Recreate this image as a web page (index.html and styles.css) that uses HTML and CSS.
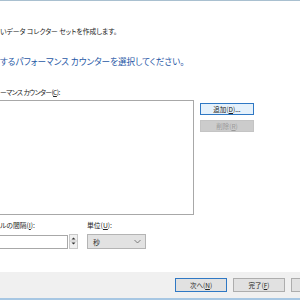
FILE: index.html
```
<!DOCTYPE html>
<html lang="ja">
<head>
<meta charset="utf-8">
<link rel="stylesheet" href="styles.css">
</head>
<body>
<div class="dialog">
  <div class="topbar"></div>
  <main class="content">
    <p class="desc">いデータ コレクター セットを作成します。</p>
    <h1 class="heading">するパフォーマンス カウンターを選択してください。</h1>
    <div class="label label-counter">ーマンス カウンター(<u>C</u>):</div>
    <div class="list-row">
      <div class="listbox"></div>
      <div class="side-buttons">
        <div class="btn default">追加(<u>D</u>)...</div>
        <div class="btn disabled">削除(<u>R</u>)</div>
      </div>
    </div>
    <div class="interval-row">
      <div class="field field-interval">
        <div class="label">ルの間隔(<u>I</u>):</div>
        <div class="input-group">
          <div class="input"></div>
          <div class="spinner">
            <svg width="9" height="14" viewBox="0 0 9 14"><path d="M2.5 5.5 L4.5 3.5 L6.5 5.5 Z" fill="#333"/><path d="M2.5 8.5 L4.5 10.5 L6.5 8.5 Z" fill="#333"/><line x1="0" y1="7" x2="9" y2="7" stroke="#c8c8c8"/></svg>
          </div>
        </div>
      </div>
      <div class="field field-unit">
        <div class="label">単位(<u>U</u>):</div>
        <div class="select">
          <span>秒</span>
          <svg width="7" height="5" viewBox="0 0 7 5"><path d="M0.5 1 L3.5 4 L6.5 1" fill="none" stroke="#666" stroke-width="0.8"/></svg>
        </div>
      </div>
    </div>
  </main>
  <footer class="footer">
    <div class="btn default">次へ(<u>N</u>)</div>
    <div class="btn">完了(<u>F</u>)</div>
    <div class="btn"></div>
  </footer>
  <div class="bottombar"></div>
</div>
</body>
</html>
```
FILE: styles.css
```
html, body {
  margin: 0;
  padding: 0;
  background: #ffffff;
}
body {
  font-family: "Noto Sans CJK JP", "Noto Sans", sans-serif;
  font-feature-settings: "palt";
  color: #1a1a1a;
  overflow: hidden;
}
.dialog {
  width: 300px;
  height: 300px;
  display: flex;
  flex-direction: column;
  overflow: hidden;
}
.topbar {
  height: 1px;
  background: #a9c0d0;
}
.content {
  flex: 1;
  display: flex;
  flex-direction: column;
}
.desc {
  margin: 25px 0 0 0;
  font-size: 6.8px;
  line-height: 11px;
  color: #222;
  white-space: nowrap;
}
.heading {
  margin: 18px 0 0 0;
  font-size: 8.6px;
  line-height: 13px;
  font-weight: normal;
  color: #1f58a6;
  white-space: nowrap;
}
.label {
  font-size: 6.8px;
  line-height: 10px;
  color: #222;
  white-space: nowrap;
}
.label-counter {
  margin-top: 19px;
  letter-spacing: -0.6px;
}
.list-row {
  display: flex;
  gap: 6px;
  margin-top: 3px;
}
.listbox {
  width: 193px;
  height: 113px;
  border: 1px solid #a8a8a8;
  border-left: none;
  background: #fff;
}
.side-buttons {
  display: flex;
  flex-direction: column;
  gap: 5px;
  padding-top: 3px;
}
.btn {
  box-sizing: border-box;
  width: 54px;
  height: 12px;
  border: 1px solid #adadad;
  background: #e1e1e1;
  font-size: 6.5px;
  line-height: 10px;
  text-align: center;
  color: #222;
  white-space: nowrap;
}
.btn.default {
  border-color: #2f78c4;
  background: #e5f1fb;
}
.btn.disabled {
  border-color: #c4c4c4;
  background: #cccccc;
  color: #9a9a9a;
}
.interval-row {
  display: flex;
  margin-top: 5px;
  gap: 9px;
}
.field {
  display: flex;
  flex-direction: column;
  gap: 4px;
}
.input-group {
  display: flex;
  gap: 1px;
}
.input {
  box-sizing: border-box;
  width: 68px;
  height: 14px;
  border: 1px solid #a8a8a8;
  border-left: none;
  margin-top: 1px;
  background: #fff;
}
.spinner {
  box-sizing: border-box;
  width: 9px;
  height: 15px;
  border: 1px solid #c8c8c8;
  background: #f0f0f0;
  display: flex;
}
.spinner svg {
  display: block;
  margin: -1px;
}
.select {
  box-sizing: border-box;
  width: 59px;
  height: 15px;
  border: 1px solid #b4b4b4;
  background: #e2e2e2;
  display: flex;
  align-items: center;
  justify-content: space-between;
  padding: 0 4px 0 5px;
  font-size: 7px;
  color: #333;
}
.select svg {
  display: block;
}
.footer {
  height: 26px;
  background: #f0f0f0;
  display: flex;
  align-items: center;
  gap: 6px;
  padding-left: 175px;
  box-sizing: border-box;
}
.footer .btn {
  flex: none;
  width: 52px;
  height: 14px;
  line-height: 12px;
  font-size: 6.5px;
}
.footer .btn.default {
  border-color: #2f78c4;
  background: #e1e1e1;
}
.bottombar {
  height: 2px;
  background: #a7c7e3;
}
```
